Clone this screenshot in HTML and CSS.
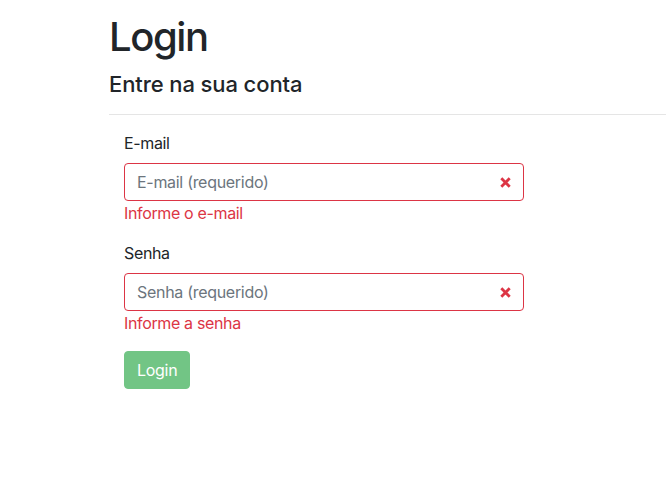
FILE: index.html
```html
<!DOCTYPE html>
<html lang="pt-BR">
<head>
<meta charset="utf-8">
<title>Login</title>
<link rel="stylesheet" href="styles.css">
</head>
<body>
<main class="page">
  <header class="page-head">
    <h1 class="title">Login</h1>
    <h4 class="subtitle">Entre na sua conta</h4>
  </header>
  <hr class="divider">
  <form class="form" novalidate>
    <div class="group">
      <label class="label" for="email">E-mail</label>
      <div class="field">
        <input class="input" id="email" type="email" placeholder="E-mail (requerido)">
        <svg class="invalid-icon" viewBox="0 0 11 11" width="11" height="11" aria-hidden="true"><path d="M1.3 1.3 L9.7 9.7 M9.7 1.3 L1.3 9.7" stroke="#dc3545" stroke-width="2.8" fill="none"/></svg>
      </div>
      <div class="feedback">Informe o e-mail</div>
    </div>
    <div class="group">
      <label class="label" for="senha">Senha</label>
      <div class="field">
        <input class="input" id="senha" type="password" placeholder="Senha (requerido)">
        <svg class="invalid-icon" viewBox="0 0 11 11" width="11" height="11" aria-hidden="true"><path d="M1.3 1.3 L9.7 9.7 M9.7 1.3 L1.3 9.7" stroke="#dc3545" stroke-width="2.8" fill="none"/></svg>
      </div>
      <div class="feedback">Informe a senha</div>
    </div>
    <button class="btn" type="submit" disabled>Login</button>
  </form>
</main>
</body>
</html>
```
FILE: styles.css
```css
* { box-sizing: border-box; }
html, body { margin: 0; padding: 0; background: #fff; }
body {
  font-family: Inter, "Noto Sans", "Liberation Sans", sans-serif;
  font-size: 16px;
  line-height: 1.5;
  letter-spacing: -0.35px;
  color: #212529;
}
.page {
  padding: 13px 0 0 109px;
}
.page-head {
  display: flex;
  flex-direction: column;
  gap: 9px;
}
.title {
  margin: 0;
  font-size: 40px;
  font-weight: 500;
  line-height: 48px;
  letter-spacing: -1.4px;
}
.subtitle {
  margin: 0;
  font-size: 22px;
  font-weight: 500;
  line-height: 28px;
  letter-spacing: -0.1px;
}
.divider {
  margin: 16px 0;
  border: 0;
  border-top: 1px solid rgba(0,0,0,.1);
}
.form {
  display: flex;
  flex-direction: column;
  align-items: flex-start;
  padding-left: 15px;
}
.group {
  display: flex;
  flex-direction: column;
  margin-bottom: 16px;
}
.label {
  margin-bottom: 8px;
}
.field {
  position: relative;
  width: 400px;
}
.input {
  display: block;
  width: 100%;
  height: 38px;
  padding: 6px 36px 6px 12px;
  font: inherit;
  letter-spacing: -0.3px;
  color: #495057;
  background: #fff;
  border: 1px solid #dc3545;
  border-radius: 4px;
  outline: none;
}
.input::placeholder { color: #6c757d; opacity: 1; }
.invalid-icon {
  position: absolute;
  right: 13px;
  top: 13.5px;
}
.feedback {
  color: #dc3545;
}
.btn {
  height: 38px;
  padding: 6px 12px;
  font: inherit;
  letter-spacing: -0.3px;
  color: #fff;
  background: #28a745;
  border: 1px solid #28a745;
  border-radius: 4px;
  opacity: .65;
}
```
